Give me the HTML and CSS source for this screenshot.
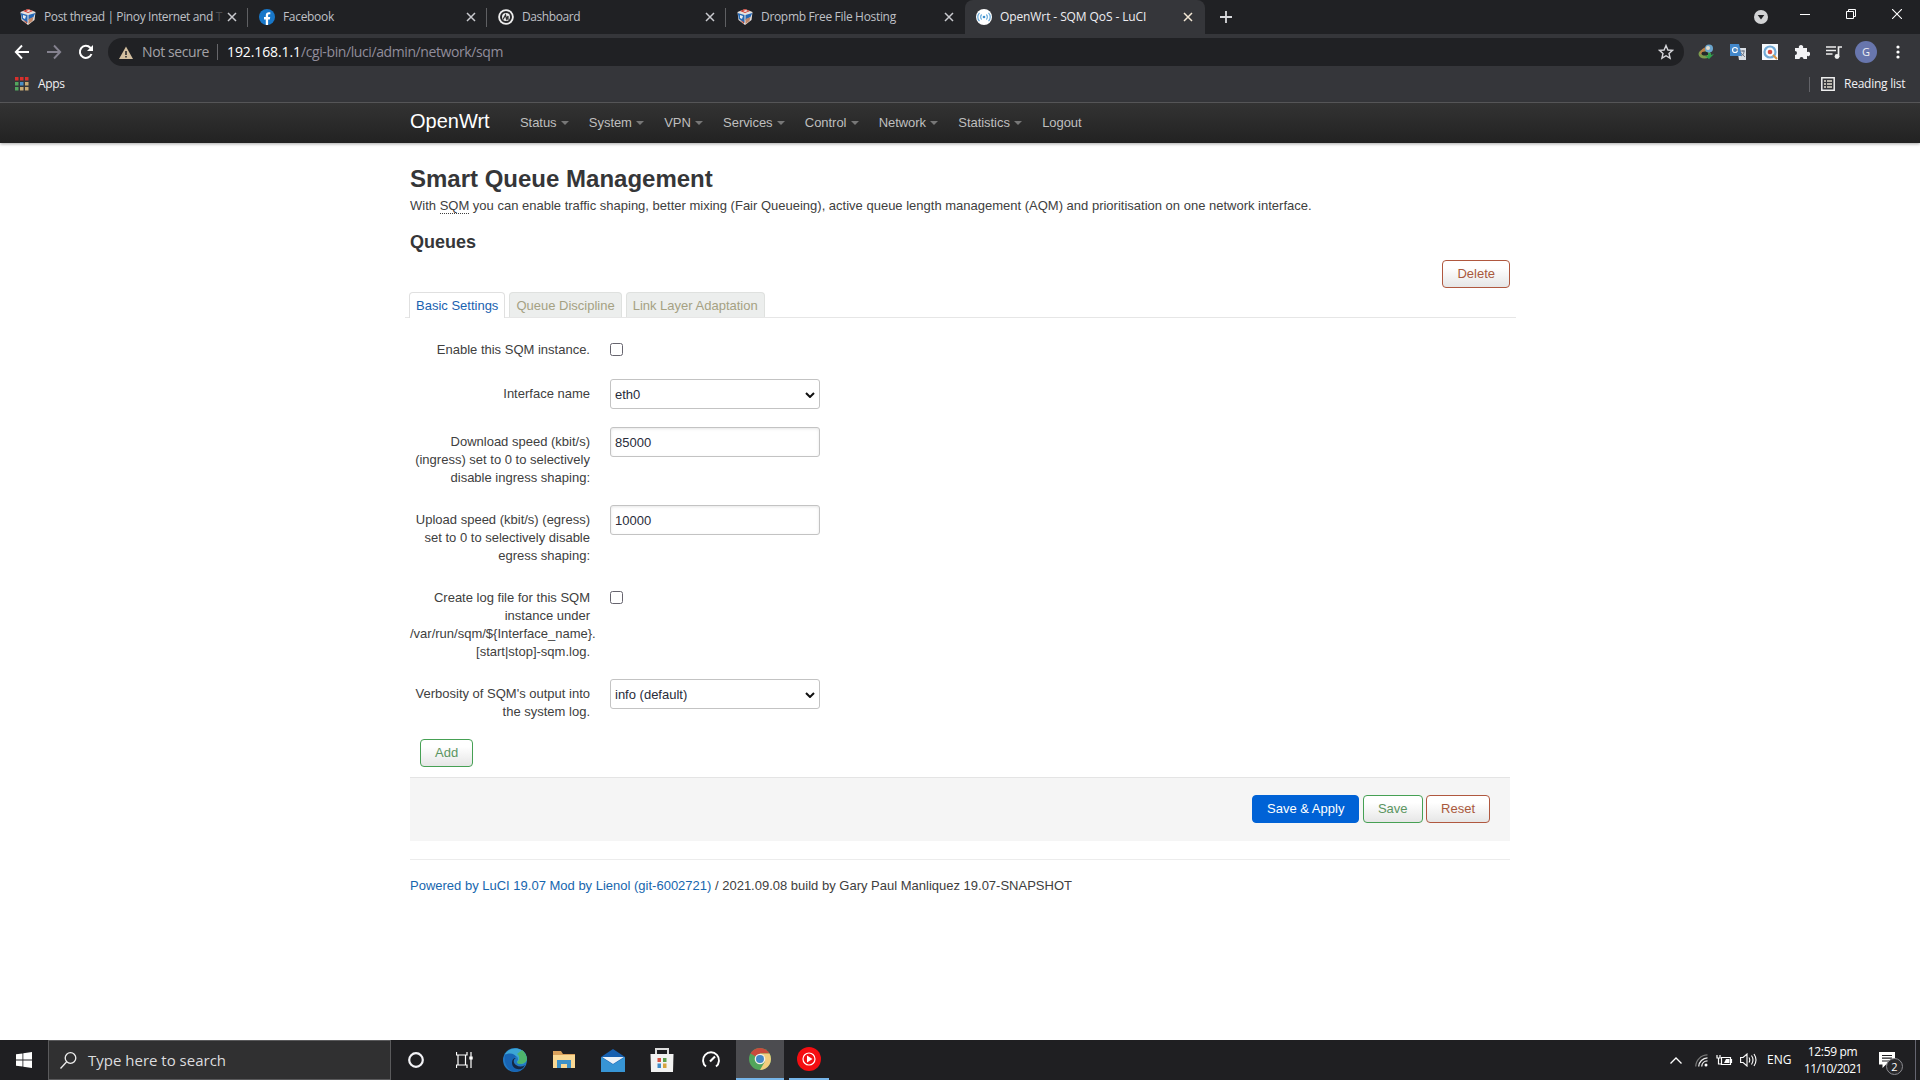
FILE: index.html
```html
<!DOCTYPE html>
<html lang="en">
<head>
<meta charset="utf-8">
<title>OpenWrt - SQM QoS - LuCI</title>
<link rel="stylesheet" href="styles.css">
</head>
<body>
<svg class="defs" width="0" height="0">
  <symbol id="cube" viewBox="0 0 16 16"><path d="M8 0 15.500 3 14.500 11 8 16 1.500 11 .5 3z" fill="#e4e1df"/><path d="M3 2 8 0l5 2-5 2z" fill="#cf3d32"/><path d="M6 2l3-1 2 1-3 1z" fill="#eee"/><path d="M.7 4 7.500 6v8L2 10z" fill="#2669b5"/><path d="M3 6l3 1-1 3-2-1z" fill="#e9edf2"/><path d="M15.300 4 8.500 6v5l5-3z" fill="#2467b6"/><path d="M8.500 10l5-2-1 4-4 3z" fill="#bf8668"/><path d="M3 11l4 2v2z" fill="#b64b38"/></symbol>
  <symbol id="x" viewBox="0 0 10 10"><path d="M1 1l8 8M9 1 1 9" fill="none" stroke="currentColor" stroke-width="1.500"/></symbol>
</svg>
<div class="browser">
  <div class="tabstrip">
    <div class="tab"><svg class="fav"><use href="#cube"/></svg><span class="title t1">Post thread | Pinoy Internet and <i>T</i></span><svg class="close"><use href="#x"/></svg></div>
    <div class="tab"><svg class="fav" viewBox="0 0 16 16"><circle cx="8" cy="8" r="8" fill="#1877c9"/><path d="M6.800 16v-5.600H5V8h1.800V6.400C6.800 4.300 8 3.200 9.800 3.200l1.500.1v2h-1c-.9 0-1.200.5-1.200 1.200V8h2.100l-.4 2.400H9.100V16z" fill="#fff"/></svg><span class="title t2">Facebook</span><svg class="close"><use href="#x"/></svg></div>
    <div class="tab"><svg class="fav" viewBox="0 0 16 16"><circle cx="8" cy="8" r="7.800" fill="#eee"/><circle cx="8" cy="8" r="5" fill="none" stroke="#28282a" stroke-width="2"/><path d="M5 10.500 7.500 6l1 4 1.500-3v4" fill="none" stroke="#333" stroke-width="1.300"/></svg><span class="title t3">Dashboard</span><svg class="close"><use href="#x"/></svg></div>
    <div class="tab last"><svg class="fav"><use href="#cube"/></svg><span class="title t4">Dropmb Free File Hosting</span><svg class="close"><use href="#x"/></svg></div>
    <div class="tab active"><svg class="fav" viewBox="0 0 16 16"><circle cx="8" cy="8" r="8" fill="#fff"/><circle cx="8" cy="8" r="1.300" fill="#3b8fce"/><path d="M5.700 5.500a3.500 3.500 0 0 0 0 5M10.300 5.500a3.500 3.500 0 0 1 0 5M3.500 3.800a6 6 0 0 0 0 8.400M12.500 3.800a6 6 0 0 1 0 8.400" fill="none" stroke="#69abdb" stroke-width="1.200"/></svg><span class="title t5">OpenWrt - SQM QoS - LuCI</span><svg class="close"><use href="#x"/></svg></div>
    <svg class="plus" viewBox="0 0 12 12"><path d="M6 0v12M0 6h12" stroke="#d8d9dc" stroke-width="1.800"/></svg>
    <div class="winctl">
      <svg width="14" height="14" viewBox="0 0 14 14" class="down"><circle cx="7" cy="7" r="7" fill="#d2d3d5"/><path d="M3.700 5h6.600L7 9.500z" fill="#202124"/></svg>
      <svg width="10" height="10" viewBox="0 0 10 10"><path d="M0 5.500h10" stroke="#fff"/></svg>
      <svg width="10" height="10" viewBox="0 0 10 10"><path d="M.5 2.500h7v7h-7zM2.500 2.500v-2h7v7h-2" fill="none" stroke="#fff"/></svg>
      <svg width="10" height="10" viewBox="0 0 10 10"><path d="M0 0l10 10M10 0 0 10" stroke="#fff" stroke-width="1.100"/></svg>
    </div>
  </div>
  <div class="toolbar">
    <div class="navbtns">
      <svg viewBox="0 0 16 16"><path d="M15 8H2M8 1.500 1.800 8 8 14.500" fill="none" stroke="#fff" stroke-width="1.900"/></svg>
      <svg viewBox="0 0 16 16"><path d="M1 8h13M8 1.500 14.200 8 8 14.500" fill="none" stroke="#85828f" stroke-width="1.900"/></svg>
      <svg viewBox="0 0 16 16"><path d="M13.500 10A6 6 0 1 1 12.300 3.800L14 5.500" fill="none" stroke="#fff" stroke-width="2"/><path d="M15 1v6H9z" fill="#fff"/></svg>
    </div>
    <div class="omnibox">
      <svg class="warn" viewBox="0 0 14 13"><path d="M7 .5 14 13H0z" fill="#d3bf9f"/><path d="M7 5v4M7 10v1.500" stroke="#202124" stroke-width="1.500"/></svg>
      <span class="notsec">Not secure</span><span class="osep"></span><span class="url"><b>192.168.1.1</b>/cgi-bin/luci/admin/network/sqm</span>
      <svg class="star" viewBox="0 0 16 16"><path d="M8 1.500 9.900 6l4.700.4-3.600 3.100 1.100 4.700L8 11.700l-4.100 2.500L5 9.500 1.400 6.400 6.100 6z" fill="none" stroke="#d6d6da" stroke-width="1.400"/></svg>
    </div>
    <div class="exts">
      <svg viewBox="0 0 16 16"><ellipse cx="6.500" cy="10" rx="6" ry="4.500" fill="#7c9b4d"/><path d="M2 10c0-4 4-7 7-7l-2 4-2 4z" fill="#bb8147"/><ellipse cx="7" cy="9.500" rx="3.500" ry="2" fill="#24292b"/><circle cx="11" cy="4.500" r="4" fill="#6ba5cd"/><circle cx="10" cy="4" r="2" fill="#e4dccc"/><path d="M7 12h3V9h3v2l3-1-5 5z" fill="#31a24c"/></svg>
      <svg viewBox="0 0 16 16"><path d="M7 4h9v12H9z" fill="#dadfe5"/><path d="M0 0h9l3 12H0z" fill="#4388cb"/><circle cx="5" cy="6" r="2.500" fill="none" stroke="#fff" stroke-width="1.200"/><path d="M5 6h3M10 7h5M13 6v2M11 12c2-1 3-2 3-5M11 9l4 4" fill="none" stroke="#777f8d" stroke-width="1"/></svg>
      <svg viewBox="0 0 16 16"><path d="M0 0h16v16H0z" fill="#f7f9fc"/><circle cx="8" cy="8" r="5.500" fill="none" stroke="#72abd7" stroke-width="2.200"/><circle cx="8" cy="8" r="2.300" fill="#d84a3e"/><path d="M11 11l4 4" stroke="#d69343" stroke-width="2"/></svg>
      <svg viewBox="0 0 16 16"><path d="M1 4h4a2.200 2.200 0 1 1 4 0h4v4a2.200 2.200 0 1 1 0 3.800V15H9.500a2 2 0 0 0-4 0H1v-4a2 2 0 0 0 0-4z" fill="#f3f3f5"/></svg>
      <svg viewBox="0 0 16 16"><path d="M0 3h10M0 6.500h10M0 10h6.500M12.500 13V3H16" fill="none" stroke="#eee" stroke-width="1.700"/><circle cx="11" cy="12.500" r="2.400" fill="#eee"/></svg>
      <span class="avatar">G</span>
      <svg viewBox="0 0 16 16"><g fill="#fff"><circle cx="8" cy="3" r="1.600"/><circle cx="8" cy="8" r="1.600"/><circle cx="8" cy="13" r="1.600"/></g></svg>
    </div>
  </div>
  <div class="bookmarks">
    <svg width="14" height="14" viewBox="0 0 14 14"><path d="M0 0h3.500v3.500H0zM5 0h3.500v3.500H5zM10 0h3.500v3.500H10z" fill="#d9302c"/><path d="M0 5h3.500v3.500H0zM0 10h3.500v3.500H0z" fill="#53a65e"/><path d="M5 5h3.500v3.500H5z" fill="#4b8ec6"/><path d="M10 5h3.500v3.500H10zM5 10h3.500v3.500H5zM10 10h3.500v3.500H10z" fill="#c9aa74"/></svg>
    <span class="apps">Apps</span>
    <span class="bsep"></span>
    <svg width="14" height="14" viewBox="0 0 14 14"><path d="M.8.8h12.400v12.400H.8z" fill="none" stroke="#eee" stroke-width="1.500"/><path d="M3 4h2M6 4h5M3 7h2M6 7h5M3 10h2M6 10h5" stroke="#e5dfcf" stroke-width="1.700"/></svg>
    <span class="reading">Reading list</span>
  </div>
</div>

<header class="topnav"><div class="wrap">
  <a class="brand">OpenWrt</a>
  <ul><li class="menu">Status</li><li class="menu">System</li><li class="menu">VPN</li><li class="menu">Services</li><li class="menu">Control</li><li class="menu">Network</li><li class="menu">Statistics</li><li>Logout</li></ul>
</div></header>

<main class="page">
  <h2>Smart Queue Management</h2>
  <p class="descr">With <abbr>SQM</abbr> you can enable traffic shaping, better mixing (Fair Queueing), active queue length management (AQM) and prioritisation on one network interface.</p>
  <h3>Queues</h3>
  <div class="del"><span class="btn red">Delete</span></div>
  <ul class="tabs"><li class="on">Basic Settings</li><li>Queue Discipline</li><li>Link Layer Adaptation</li></ul>
  <div class="form">
    <div class="row first"><label>Enable this SQM instance.</label><span class="check"></span></div>
    <div class="row"><label>Interface name</label><span class="field">eth0<svg class="chev" viewBox="0 0 10 6"><path d="M1 1l4 4 4-4" fill="none" stroke="#111" stroke-width="2"/></svg></span></div>
    <div class="row"><label>Download speed (kbit/s)<br>(ingress) set to 0 to selectively<br>disable ingress shaping:</label><span class="field input">85000</span></div>
    <div class="row"><label>Upload speed (kbit/s) (egress)<br>set to 0 to selectively disable<br>egress shaping:</label><span class="field input">10000</span></div>
    <div class="row"><label>Create log file for this SQM<br>instance under<br>/var/run/sqm/${Interface_name}.<br>[start|stop]-sqm.log.</label><span class="check"></span></div>
    <div class="row"><label>Verbosity of SQM's output into<br>the system log.</label><span class="field">info (default)<svg class="chev" viewBox="0 0 10 6"><path d="M1 1l4 4 4-4" fill="none" stroke="#111" stroke-width="2"/></svg></span></div>
  </div>
  <div class="add"><span class="btn green">Add</span></div>
  <div class="actions"><span class="btn blue">Save &amp; Apply</span><span class="btn green">Save</span><span class="btn red">Reset</span></div>
  <footer><a>Powered by LuCI 19.07 Mod by Lienol (git-6002721)</a> / 2021.09.08 build by Gary Paul Manliquez 19.07-SNAPSHOT</footer>
</main>

<div class="taskbar">
  <div class="start"><svg width="16" height="16" viewBox="0 0 16 16"><path d="M0 2.300 6.500 1.400v6.200H0zM7.300 1.300 16 0v7.600H7.300zM0 8.400h6.500v6.200L0 13.700zM7.300 8.400H16V16l-8.700-1.300z" fill="#fff"/></svg></div>
  <div class="search"><svg width="17" height="17" viewBox="0 0 17 17"><circle cx="10.500" cy="6" r="5.300" fill="none" stroke="#eee" stroke-width="1.300"/><path d="M6.500 10 .5 16.500" stroke="#eee" stroke-width="1.300"/></svg><span>Type here to search</span></div>
  <div class="pins">
    <span class="cortana"><svg width="16" height="16" viewBox="0 0 16 16"><circle cx="8" cy="8" r="6.800" fill="none" stroke="#f3f3f7" stroke-width="2.200"/></svg></span>
    <span><svg width="17" height="16" viewBox="0 0 17 16"><path d="M.5 0v3h10.500V0M.5 16v-3h10.500v3M2 3v10M9.500 3v10M15 0v16" fill="none" stroke="#fff" stroke-width="1.200"/><path d="M13.300 4.500h3.400v3h-3.400z" fill="#fff"/></svg></span>
    <span class="edge"><svg width="24" height="24" viewBox="0 0 24 24"><circle cx="12" cy="12" r="12" fill="#2279c4"/><path d="M2 6C7-2 20-1 23 7c2 6-1 9-5 9-4 0-5-2-3-4 1-4-5-6-9-3z" fill="#3ca5d5"/><path d="M19 2c5 4 7 11 2 13-3 2-7 1-7-1 3-2 3-6 0-8z" fill="#4eb66c"/><path d="M2 7c5-3 10-1 11 2-4 1-5 6-2 9 3 3 7 3 10 1-4 6-12 6-16 1C2 16 1 11 2 7z" fill="#1764b4"/><path d="M13 10c-3 1-3 5 0 7 3 2 6 2 9 0l-2 3c-5 3-11 0-11-5 0-3 1-5 4-5z" fill="#152744"/></svg></span>
    <span><svg width="22" height="20" viewBox="0 0 22 20"><path d="M0 1h8l2 3h12v14H0z" fill="#d9a05b"/><path d="M1 5h21v13H0V5z" fill="#f9d894"/><path d="M4 10h14v8h-4v-4H8v4H4z" fill="#3d91c9"/></svg></span>
    <span><svg width="24" height="23" viewBox="0 0 24 23"><path d="M12 0l12 8v15H0V8z" fill="#1760b0"/><path d="M0 8l12 7.500L24 8v15H0z" fill="#3795d5"/><path d="M1 8h22l-11 7z" fill="#edf3f8"/></svg></span>
    <span><svg width="24" height="24" viewBox="0 0 24 24"><path d="M6 7V1h12v6" fill="none" stroke="#ddd" stroke-width="2"/><path d="M.5 6h23L23 24H1z" fill="#f2f2f2"/><path d="M7.500 10H11v4H7.500z" fill="#d95341"/><path d="M13 10h3.500v4H13z" fill="#5ba04c"/><path d="M7.500 15.500H11V20H7.500z" fill="#3f8cc8"/><path d="M13 15.500h3.500V20H13z" fill="#d5a33e"/></svg></span>
    <span><svg width="20" height="20" viewBox="0 0 20 20"><path d="M5 16.500a8 8 0 1 1 10 0" fill="none" stroke="#fff" stroke-width="1.900"/><path d="M9 11.500l5-5" stroke="#fff" stroke-width="2.200"/></svg></span>
    <span class="cur"><svg width="22" height="22" viewBox="0 0 22 22"><circle cx="11" cy="11" r="11" fill="#52a55b"/><path d="M11 11 1.500 5.500A11 11 0 0 1 20.500 5.500H11z" fill="#c94a3c"/><path d="M11 5.500h9.500A11 11 0 0 1 11 22l4.800-8.300z" fill="#f2cd7e"/><circle cx="11" cy="11" r="5.300" fill="#f4f0e7"/><circle cx="11" cy="11" r="4" fill="#4587c6"/></svg></span>
    <span class="run"><svg width="24" height="24" viewBox="0 0 24 24"><circle cx="12" cy="12" r="12" fill="#f40e12"/><circle cx="12" cy="12" r="6" fill="none" stroke="#fff" stroke-width="1.200"/><path d="M10 8.500v7l5.500-3.500z" fill="#fff"/></svg></span>
  </div>
  <div class="tray">
    <svg width="12" height="7" viewBox="0 0 12 7"><path d="M.5 6.500 6 1l5.500 5.500" fill="none" stroke="#fff" stroke-width="1.300"/></svg>
    <svg class="wifi" width="13" height="13" viewBox="0 0 13 13"><g fill="none" stroke-width="1.300"><path d="M.7 12.500A12 12 0 0 1 12.500.9" stroke="#777"/><path d="M3.700 12.500a9 9 0 0 1 8.800-8.600M6.700 12.500a6 6 0 0 1 5.800-5.600" stroke="#eee"/></g><circle cx="11" cy="11" r="1.500" fill="#fff"/></svg>
    <svg class="bat" width="17" height="12" viewBox="0 0 17 12"><path d="M5.500 3.500h9v7h-9zM15.500 5v4M1 1v3h3V1M2.500 4v6h3" fill="none" stroke="#fff" stroke-width="1.200"/><path d="M10 5h3.500v4H8z" fill="#fff"/></svg>
    <svg class="snd" width="17" height="14" viewBox="0 0 17 14"><path d="M.6 4.500h2.500L7 1v12L3.100 9.500H.6zM9 4.500q1.500 2.500 0 5M11.500 2.500q3 4.500 0 9M14 1q4 6 0 12" fill="none" stroke="#fff" stroke-width="1.100"/></svg>
    <span class="lang">ENG</span>
    <div class="clock"><span class="time">12:59 pm</span><span class="date">11/10/2021</span></div>
    <div class="note"><svg width="16" height="16" viewBox="0 0 16 16"><path d="M0 0h16v12.500H7L3.500 16v-3.500H0z" fill="#fff"/><path d="M3 3.500h10M3 6.200h10M3 9h7" stroke="#1f1f22" stroke-width="1.200"/></svg><span class="badge">2</span></div>
  </div>
</div>
</body>
</html>
```
FILE: styles.css
```css
* { box-sizing: border-box; }
body { margin: 0; width: 1920px; height: 1080px; overflow: hidden; background: #fff; color: #404040; font: 13px/18px "Liberation Sans", Arial, sans-serif; display: flex; flex-direction: column; }
ul { list-style: none; margin: 0; padding: 0; }
.defs { position: absolute; }
svg { flex: none; display: block; }

.browser, .taskbar { font-family: "Open Sans", "Noto Sans", sans-serif; font-size: 12px; white-space: nowrap; }
.browser { height: 103px; background: #35363a; border-bottom: 1px solid #5b5b5d; flex: none; }
.tabstrip { height: 34px; background: #202124; display: flex; padding-left: 9px; }
.tab { width: 239px; height: 34px; padding-left: 11px; display: flex; align-items: center; color: #bfc0c6; background: linear-gradient(#5f6063, #5f6063) no-repeat 238px 8px / 1px 19px; }
.tab.last { background: none; }
.tab.active { background: #35363a; color: #eeeef2; border-radius: 8px 8px 0 0; width: 240px; }
.fav { width: 16px; height: 16px; }
.title { margin-left: 8px; width: 176px; letter-spacing: -.32px; }
.t1 { letter-spacing: -.38px; }
.t3 { letter-spacing: -.43px; }
.t5 { letter-spacing: -.1px; }
.title i { font-style: normal; color: #4d4e52; }
.close { width: 10px; height: 10px; margin-left: 7px; color: #c9cacf; }
.active .close { color: #f3e8d5; }
.plus { width: 12px; height: 12px; margin: 11px 0 0 15px; }
.winctl { margin-left: auto; display: flex; align-items: center; gap: 36px; padding: 0 18px 6px 0; }
.winctl .down { margin: 6px -4px 0 0; }

.toolbar { height: 36px; display: flex; align-items: center; }
.navbtns { display: flex; gap: 16px; padding-left: 14px; width: 108px; }
.navbtns svg { width: 16px; height: 16px; }
.omnibox { width: 1576px; height: 28px; border-radius: 14px; background: #202124; display: flex; align-items: center; padding-left: 11px; font-size: 14px; }
.warn { width: 14px; height: 13px; }
.notsec { color: #a3a1a6; margin-left: 9px; width: 67px; letter-spacing: -.4px; }
.osep { width: 1px; height: 16px; background: #66666a; margin: 0 9px 0 8px; }
.url { color: #918d9b; letter-spacing: -.4px; }
.url b { font-weight: 400; color: #fff; letter-spacing: -.1px; }
.star { width: 16px; height: 16px; margin: 0 10px 0 auto; }
.exts { display: flex; align-items: center; gap: 16px; padding-left: 14px; }
.exts svg { width: 16px; height: 16px; }
.avatar { width: 22px; height: 22px; border-radius: 50%; background: #6876ad; color: #f0f0f5; text-align: center; line-height: 22px; font-size: 11px; margin: 0 -3px; }
.bookmarks { height: 32px; display: flex; align-items: center; padding: 0 14px 4px 15px; color: #f1f1f3; }
.apps { margin-left: 9px; letter-spacing: -.3px; }
.bsep { width: 1px; height: 15px; background: #626368; margin: 0 11px 0 auto; }
.reading { margin-left: 9px; width: 62px; letter-spacing: -.25px; }

.topnav { height: 40px; flex: none; background: linear-gradient(#333, #222); box-shadow: 0 1px 3px rgba(0,0,0,.35); }
.wrap { width: 1100px; margin: 0 auto; display: flex; }
.brand { color: #fff; font-size: 20px; line-height: 36px; width: 100px; }
.topnav ul { display: flex; padding-top: 11px; }
.topnav li { color: #bfbfbf; padding: 0 10px; letter-spacing: -.05px; }
.menu::after { content: ""; display: inline-block; border: 4px solid transparent; border-top-color: #777; border-bottom: 0; margin-left: 4.300px; vertical-align: 2px; }

.page { width: 1100px; margin: 0 auto; flex: 1; }
h2 { font-size: 24px; line-height: 36px; margin: 18px 0 0; color: #353638; }
.descr { margin: 0; line-height: 18px; }
abbr { border-bottom: 1px dotted #404040; text-decoration: none; }
h3 { font-size: 18px; line-height: 36px; margin: 9px 0 0; color: #353638; }
.del { height: 32px; display: flex; justify-content: flex-end; }
.btn { height: 28px; display: inline-block; border: 1px solid; border-radius: 4px; padding: 4px 14px; line-height: 18px; background: linear-gradient(#fff, #fff 25%, #e6e6e6); }
.red { color: #a9593d; border-color: #b0583f; }
.green { color: #5b9561; border-color: #46a054; }
.blue { background: #0062d6; color: #fff; border-color: #0062d6; }
.tabs { display: flex; gap: 4px; padding-left: 4px; margin: 0 -6px 0 -5px; height: 26px; border-bottom: 1px solid #e6e6e6; }
.tabs li { height: 25px; padding: 4px 6px; border: 1px solid #dfe1df; border-bottom: 0; border-radius: 4px 4px 0 0; color: #a5a183; background: #eceeed; }
.tabs .on { height: 26px; background: #fff; color: #1a62b0; border-color: #e0e0e0; }
.form { padding-top: 17px; }
.row { display: flex; gap: 20px; margin-bottom: 18px; }
.row.first { margin-bottom: 20px; }
.row label { width: 180px; padding-top: 6px; text-align: right; white-space: nowrap; }
.check { width: 13px; height: 13px; border: 1px solid #66646e; border-radius: 2.500px; margin-top: 8px; }
.field { width: 210px; height: 30px; border: 1px solid #c3c3c3; border-radius: 3px; padding: 6px 4px 4px; color: #292c3a; display: flex; justify-content: space-between; align-items: center; }
.input { box-shadow: inset 0 1px 3px rgba(0,0,0,.1); }
.chev { width: 10px; height: 6px; }
.add { padding: 0 10px; height: 38px; }
.actions { height: 64px; background: #f5f5f5; border-top: 1px solid #e4e4e4; display: flex; justify-content: flex-end; gap: 3.500px; padding: 17px 20px; }
footer { margin-top: 18px; border-top: 1px solid #ececec; padding-top: 17px; }
footer a { color: #1766ae; }

.taskbar { height: 40px; flex: none; background: #1f1f22; display: flex; color: #fff; }
.start { width: 48px; display: flex; align-items: center; justify-content: center; }
.search { width: 343px; background: #303031; border: 1px solid #5a5a5c; display: flex; align-items: center; gap: 11px; padding-left: 11px; font-size: 15px; color: #dcdcdf; }
.pins { display: flex; }
.pins span { width: 49px; display: flex; align-items: center; justify-content: center; }
.pins .edge { margin-left: 1px; }
.pins .cur { width: 48px; background: #4c4c50; border-bottom: 2px solid #76b5e9; margin-left: 1px; }
.pins .run { width: 40px; margin-left: 5px; border-bottom: 2px solid #76b5e9; }
.tray { margin-left: auto; display: flex; align-items: center; padding-right: 4px; }
.wifi { margin-left: 13px; }
.bat { margin-left: 8px; }
.snd { margin-left: 7px; }
.lang { margin-left: 10px; width: 24px; }
.clock { width: 57px; margin-left: 13px; display: flex; flex-direction: column; text-align: center; line-height: 17px; padding-bottom: 1px; letter-spacing: -.35px; }
.date { letter-spacing: -.6px; }
.note { width: 37px; height: 40px; margin-left: 18px; border-right: 1px solid #656570; padding-top: 12px; position: relative; }
.badge { position: absolute; left: 7px; top: 18px; width: 17px; height: 17px; border: 1px solid #8b8b90; border-radius: 50%; background: #29292c; text-align: center; line-height: 15px; font-size: 11px; }
```
